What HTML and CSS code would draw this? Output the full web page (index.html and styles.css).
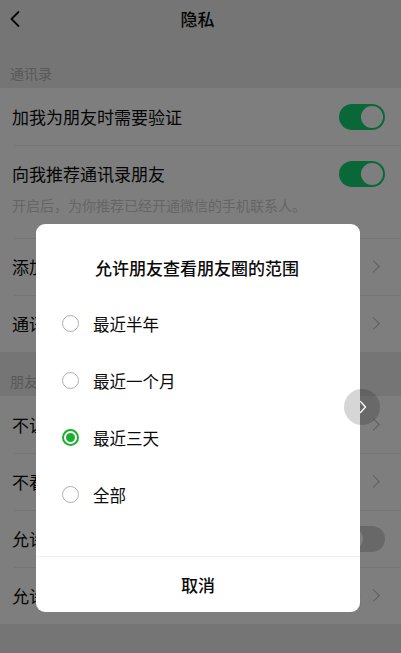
FILE: index.html
```html
<!DOCTYPE html>
<html lang="zh-CN">
<head>
<meta charset="utf-8">
<title>隐私</title>
<link rel="stylesheet" href="styles.css">
</head>
<body>
<div class="screen">
  <header class="nav">
    <svg class="back" width="12" height="18" viewBox="0 0 12 18"><path d="M9.5 2 L2.5 9 L9.5 16" fill="none" stroke="#111" stroke-width="1.8" stroke-linecap="round" stroke-linejoin="round"/></svg>
    <h1 class="nav-title">隐私</h1>
  </header>

  <div class="section-title">通讯录</div>
  <div class="group">
    <div class="cell">
      <span class="label">加我为朋友时需要验证</span>
      <span class="switch on"></span>
    </div>
    <div class="cell cell-tall">
      <div class="cell-row">
        <span class="label">向我推荐通讯录朋友</span>
        <span class="switch on"></span>
      </div>
      <p class="desc">开启后，为你推荐已经开通微信的手机联系人。</p>
    </div>
    <div class="cell">
      <span class="label">添加我的方式</span>
      <span class="chev"></span>
    </div>
    <div class="cell">
      <span class="label">通讯录黑名单</span>
      <span class="chev"></span>
    </div>
  </div>

  <div class="section-title">朋友圈</div>
  <div class="group">
    <div class="cell">
      <span class="label">不让他（她）看</span>
      <span class="chev"></span>
    </div>
    <div class="cell">
      <span class="label">不看他（她）</span>
      <span class="chev"></span>
    </div>
    <div class="cell">
      <span class="label">允许陌生人查看十条朋友圈</span>
      <span class="switch off"></span>
    </div>
    <div class="cell">
      <span class="label">允许朋友查看朋友圈的范围</span>
      <span class="value">最近三天</span>
      <span class="chev"></span>
    </div>
  </div>

  <div class="mask">
    <div class="dialog">
      <h2 class="dialog-title">允许朋友查看朋友圈的范围</h2>
      <ul class="options">
        <li class="option"><span class="radio"></span><span>最近半年</span></li>
        <li class="option"><span class="radio"></span><span>最近一个月</span></li>
        <li class="option"><span class="radio checked"></span><span>最近三天</span></li>
        <li class="option"><span class="radio"></span><span>全部</span></li>
      </ul>
      <div class="dialog-footer">取消</div>
    </div>
  </div>

  <div class="float-btn">
    <svg width="8" height="14" viewBox="0 0 8 14"><path d="M1.5 1.5 L6.5 7 L1.5 12.5" fill="none" stroke="#fff" stroke-width="1.3" stroke-linecap="round" stroke-linejoin="round"/></svg>
  </div>
</div>
</body>
</html>
```

FILE: styles.css
```css
* { box-sizing: border-box; }
html, body { margin: 0; padding: 0; }
body {
  font-family: "Noto Sans CJK SC", "Noto Sans", sans-serif;
  color: #0a0a0a;
  background: #ededed;
}
.screen {
  position: relative;
  width: 401px;
  height: 653px;
  overflow: hidden;
  background: #ededed;
}
.nav {
  height: 44px;
  padding-bottom: 6px;
  display: flex;
  align-items: center;
  justify-content: center;
  position: relative;
}
.back {
  position: absolute;
  left: 9px;
  top: 10px;
}
.nav-title {
  margin: 0;
  font-size: 17px;
  font-weight: 500;
  line-height: 24px;
  color: #0a0a0a;
  margin-left: -6px;
}
.section-title {
  padding: 20px 12px 6px 10px;
  font-size: 14px;
  line-height: 18px;
  color: #b4b4b4;
}
.group { background: #fff; }
.cell {
  position: relative;
  height: 57px;
  display: flex;
  align-items: center;
  padding: 0 16px 0 12px;
  font-size: 17px;
}
.cell + .cell::before {
  content: "";
  position: absolute;
  left: 14px;
  right: 0;
  top: 0;
  height: 1px;
  background: #ececec;
}
.cell-tall {
  height: auto;
  display: block;
  padding-top: 17px;
  padding-bottom: 24px;
}
.cell-row {
  display: flex;
  align-items: center;
  height: 24px;
}
.label {
  flex: 1;
  line-height: 24px;
  white-space: nowrap;
}
.desc {
  margin: 10px 0 0;
  font-size: 14px;
  line-height: 18px;
  color: #cdcdcd;
}
.value {
  color: #8a8a8a;
  margin-right: 8px;
}
.chev {
  width: 9px;
  height: 9px;
  border-top: 1.6px solid #bcbcbc;
  border-right: 1.6px solid #bcbcbc;
  transform: rotate(45deg);
  margin-right: 7px;
}
.switch {
  position: relative;
  width: 46px;
  height: 26px;
  border-radius: 13px;
  flex: none;
}
.switch::after {
  content: "";
  position: absolute;
  top: 2px;
  width: 22px;
  height: 22px;
  border-radius: 50%;
  background: #fff;
}
.switch.on { background: #14d372; }
.switch.on::after { right: 2px; }
.switch.off { background: #d2d2d2; }
.switch.off::after { left: 2px; }

.mask {
  position: absolute;
  inset: 0;
  background: rgba(0, 0, 0, 0.505);
  padding: 224px 0 0 36px;
}
.dialog {
  width: 324px;
  background: #fff;
  border-radius: 9px;
  overflow: hidden;
}
.dialog-title {
  margin: 0;
  padding: 32px 0 15px;
  text-align: center;
  font-size: 17px;
  line-height: 24px;
  font-weight: 500;
  color: #0a0a0a;
  margin-left: -2px;
}
.options {
  list-style: none;
  margin: 0;
  padding: 0 0 33px;
}
.option {
  height: 57px;
  display: flex;
  align-items: center;
  padding-left: 26px;
  font-size: 16.5px;
  color: #0a0a0a;
}
.radio {
  width: 17px;
  height: 17px;
  border-radius: 50%;
  border: 1.5px solid #adadad;
  margin-right: 14px;
  flex: none;
  display: flex;
  align-items: center;
  justify-content: center;
}
.radio.checked {
  border: 2px solid #1cae2e;
}
.radio.checked::after {
  content: "";
  width: 9px;
  height: 9px;
  border-radius: 50%;
  background: #1cae2e;
}
.dialog-footer {
  border-top: 1px solid #f0f0f0;
  height: 56px;
  display: flex;
  align-items: center;
  justify-content: center;
  font-size: 17px;
  font-weight: 500;
  color: #0a0a0a;
}
.float-btn {
  position: absolute;
  left: 344px;
  top: 389px;
  width: 36px;
  height: 36px;
  border-radius: 50%;
  background: rgba(0, 0, 0, 0.16);
  display: flex;
  align-items: center;
  justify-content: center;
  padding-left: 2px;
}
```
